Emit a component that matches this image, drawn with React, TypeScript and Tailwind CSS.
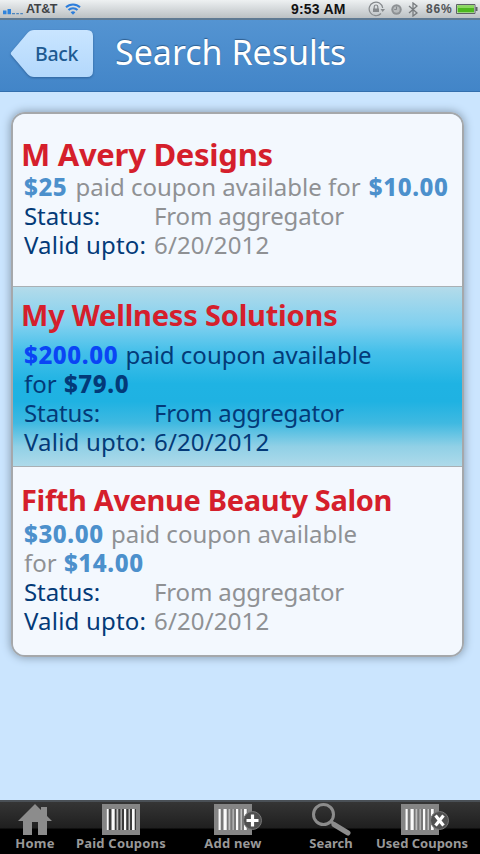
import { ReactNode } from 'react';
import clsx from 'clsx';

type Coupon = {
  name: string;
  nameClass: string;
  rowClass: string;
  offerClass: string;
  offer: ReactNode;
  active?: boolean;
};

const coupons: Coupon[] = [
  {
    name: 'M Avery Designs',
    nameClass: 'text-[31px] tracking-[-0.27px]',
    rowClass: 'h-[172px] pt-[22px]',
    offerClass: '',
    offer: (
      <p>
        <b className="mr-[2px] font-extrabold tracking-[0.6px] text-[#4c90cc]">$25</b> paid coupon available for{' '}
        <b className="ml-[2px] font-extrabold tracking-[0.6px] text-[#4c90cc]">$10.00</b>
      </p>
    ),
  },
  {
    name: 'My Wellness Solutions',
    nameClass: 'text-[29px] tracking-[-0.2px]',
    rowClass: 'h-[181px] border-y border-[#a9b0b4] pt-[10px]',
    offerClass: 'mt-[7px]',
    offer: (
      <>
        <p>
          <b className="mr-px font-extrabold tracking-[0.6px] text-[#0a45f5]">$200.00</b> paid coupon available
        </p>
        <p>
          for <b className="ml-px font-extrabold tracking-[0.6px]">$79.0</b>
        </p>
      </>
    ),
    active: true,
  },
  {
    name: 'Fifth Avenue Beauty Salon',
    nameClass: 'text-[29px] tracking-[-0.35px]',
    rowClass: 'h-[188px] pt-[15px]',
    offerClass: 'mt-px',
    offer: (
      <>
        <p>
          <b className="mr-px font-extrabold tracking-[0.6px] text-[#4c90cc]">$30.00</b> paid coupon available
        </p>
        <p>
          for <b className="ml-px font-extrabold tracking-[0.6px] text-[#4c90cc]">$14.00</b>
        </p>
      </>
    ),
  },
];

function StatusBar() {
  return (
    <div className="flex h-[20px] shrink-0 items-center border-b-2 border-[#5f7a93] bg-linear-to-b from-[#eef1f2] to-[#bcc1c4] font-['Liberation_Sans'] font-bold">
      <svg className="mt-[5px] ml-[3px] h-[6px] w-[20px]" viewBox="0 0 20 6">
        <path d="M0 1.500h3.500V5.300H0zM4.500 0h3.500v5.300h-3.500z" fill="#2f83dc" />
        <path d="M9 4h3v1.300H9zM13.300 4h2.600v1.300h-2.600zM17.300 4h2.600v1.300h-2.600z" fill="#4b84bd" />
      </svg>
      <span className="ml-[3px] w-[38px] text-[12.5px] tracking-[-0.3px] text-[#404346]">AT&amp;T</span>
      <svg className="ml-px h-[12px] w-[16px]" viewBox="0 0 16 12" fill="none" stroke="#2c7ddb" strokeWidth="2">
        <path d="M1 4.300a10 10 0 0 1 14 0M3.500 7a6.400 6.400 0 0 1 9 0" />
        <path d="M5.600 9.200a3.600 3.600 0 0 1 4.800 0L8 11.800z" fill="#2c7ddb" stroke="none" />
      </svg>
      <span className="ml-[210px] w-[56px] text-[14px] tracking-[0.2px] whitespace-nowrap text-[#111]">9:53 AM</span>
      <svg className="ml-[21px] h-[16px] w-[17px]" viewBox="0 0 17 16" fill="none" stroke="#85898c" strokeWidth="1.200">
        <path d="M13 12.500A6.800 6.800 0 1 1 14.700 7" />
        <path d="M12.500 8h4.500l-2.300 3z" fill="#85898c" stroke="none" />
        <path d="M5 7.500h6V11H5z" fill="#85898c" stroke="none" />
        <path d="M6.200 8V5.800a1.800 1.800 0 0 1 3.600 0V8" />
      </svg>
      <svg className="ml-[6px] h-[11px] w-[11px]" viewBox="0 0 11 11">
        <circle cx="5.500" cy="5.500" r="5.200" fill="#8d9194" />
        <circle cx="5.500" cy="5.500" r="3.200" fill="#b7bbbd" />
        <path d="M5.500 2.500v3H3.200" fill="none" stroke="#85898c" />
      </svg>
      <svg className="ml-[6px] h-[15px] w-[10px]" viewBox="0 0 10 15" fill="none" stroke="#777b7e" strokeWidth="1.300">
        <path d="M1 4l8 7-4 3V1l4 3-8 7" />
      </svg>
      <span className="ml-[8px] w-[28px] text-[12px] tracking-[0.8px] text-[#505356]">86%</span>
      <svg className="ml-[2px] h-[12px] w-[22px]" viewBox="0 0 22 12">
        <path d="M.5 1.500h18.500v9H.5z" fill="#e8f0e2" stroke="#5d6165" />
        <path d="M1.500 2.500h16.500v7H1.500z" fill="#4cb81f" />
        <path d="M1.500 2.500h16.500v2.500H1.500z" fill="#8ad85f" />
        <path d="M19.500 4h2v4h-2z" fill="#5d6165" />
      </svg>
    </div>
  );
}

function Header() {
  return (
    <header className="flex h-[72px] shrink-0 items-start border-b border-[#336fae] bg-linear-to-b from-[#5494d2] to-[#4285c8]">
      <button className="relative mt-[9px] ml-[10px] h-[50px] w-[84px]">
        <svg className="absolute inset-0 drop-shadow-[0_1px_1px_rgba(20,60,110,0.5)]" width="84" height="50" viewBox="0 0 84 50">
          <defs>
            <linearGradient id="back" x1="0" y1="0" x2="0" y2="1">
              <stop offset="0" stopColor="#c9e5ff" />
              <stop offset="1" stopColor="#b3d8fc" />
            </linearGradient>
          </defs>
          <path d="M24 1H77Q83 1 83 7V42Q83 48 77 48H24Q20 48 17.500 45L1 25.500Q.5 24.500 1 23.500L17.500 4Q20 1 24 1z" fill="url(#back)" />
        </svg>
        <span className="relative block pl-[25px] text-left text-[19.5px] leading-[50px] font-medium tracking-[-0.3px] text-[#205a92]">Back</span>
      </button>
      <h1 className="ml-[21px] pt-[8px] text-[34px] leading-[48px] font-normal whitespace-nowrap text-white [text-shadow:0_-1px_1px_#2f5f90]">
        Search Results
      </h1>
    </header>
  );
}

function CouponRow({ coupon }: { coupon: Coupon }) {
  return (
    <article
      className={clsx(
        'pl-[8px] whitespace-nowrap',
        coupon.rowClass,
        coupon.active
          ? 'bg-[linear-gradient(#b3dbea,#80d0ef_21%,#45c0ea_36%,#1fb3e3_54%,#1fb2e2_64%,#3fb9e1_76%,#90d0e6_89%,#aedaea)] text-[#033a78]'
          : 'bg-[#f3f8fe] text-[#8f9194]',
      )}
    >
      <h2 className={clsx('leading-9 font-bold text-[#d51f2c]', coupon.nameClass)}>{coupon.name}</h2>
      <div className={clsx('pl-[3px] text-[24px] leading-[29px]', coupon.offerClass)}>
        {coupon.offer}
        <dl className="grid grid-cols-[130px_1fr]">
          <dt className="tracking-[-0.1px] text-[#033a78]">Status:</dt>
          <dd className="tracking-[-0.15px]">From aggregator</dd>
          <dt className="tracking-[0.2px] text-[#033a78]">Valid upto:</dt>
          <dd className="tracking-[0.15px]">6/20/2012</dd>
        </dl>
      </div>
    </article>
  );
}

function Barcode({ badge }: { badge?: 'plus' | 'x' }) {
  return (
    <svg className="h-[33px] w-[48px]" viewBox="0 0 48 33">
      <path d="M0 1h38v31H0z" fill="#858585" />
      <path d="M4 6h30v21H4z" fill={badge ? '#777' : '#3a3a3a'} />
      <path d="M4.500 6h2.200v21H4.500zM9.500 6h3.200v21H9.500zM22 6h2.200v21H22zM30 6h2.700v21H30z" fill="#fafafa" />
      <path d="M14.500 6h1.800v21h-1.800zM18.500 6h1.300v21h-1.300zM26.500 6h1.500v21h-1.500z" fill="#bdbdbd" />
      {badge && (
        <>
          <circle cx="38.500" cy="17.500" r="9" fill="#505050" stroke="#777" />
          <path
            d={badge === 'plus' ? 'M38.500 11.500v12M32.500 17.500h12' : 'M34.500 12.500l8 10M42.500 12.500l-8 10'}
            stroke="#fff"
            strokeWidth="3.200"
          />
        </>
      )}
    </svg>
  );
}

function TabBar() {
  return (
    <nav className="flex h-[54px] shrink-0 border-t-2 border-[#4a5056] bg-[linear-gradient(#353535,#1f1f1f_50%,#000_52%)] text-[13px] leading-[14px] font-bold whitespace-nowrap text-[#999]">
      <div className="flex w-[70px] flex-col items-center">
        <svg className="mt-px h-[33px] w-[34px]" viewBox="0 0 34 33" fill="#8c8c8c">
          <path d="M17 1L0 18h5v14h9V19h6v13h9V18h5l-5-5V4h-6v3z" />
        </svg>
        <span className="tracking-[0.2px]">Home</span>
      </div>
      <div className="flex w-[102px] flex-col items-center">
        <div className="mt-px ml-[10px]">
          <Barcode />
        </div>
        <span className="tracking-[0.2px]">Paid Coupons</span>
      </div>
      <div className="flex w-[122px] flex-col items-center">
        <div className="mt-px ml-[10px]">
          <Barcode badge="plus" />
        </div>
        <span className="tracking-[0.2px]">Add new</span>
      </div>
      <div className="flex w-[74px] flex-col items-center">
        <svg className="mt-px h-[33px] w-[40px]" viewBox="0 0 40 33" fill="none" stroke="#8c8c8c">
          <circle cx="12.500" cy="11.500" r="10" strokeWidth="3" />
          <path d="M20 18.500l4 3" strokeWidth="3" />
          <path d="M23 21.500l14 8.500" strokeWidth="5" strokeLinecap="round" />
        </svg>
        Search
      </div>
      <div className="flex w-[108px] flex-col items-center">
        <div className="mt-px ml-[6px]">
          <Barcode badge="x" />
        </div>
        <span>Used Coupons</span>
      </div>
    </nav>
  );
}

export default function App() {
  return (
    <div className="flex h-[854px] w-[480px] flex-col overflow-hidden bg-[#cbe5fe] font-['Noto_Sans',sans-serif]">
      <StatusBar />
      <Header />
      <main className="flex-1 px-[11px] pt-[20px]">
        <section className="w-[453px] overflow-hidden rounded-[14px] border-2 border-[#a5a8ab] shadow-[0_0_9px_1px_#8ba0b5]">
          {coupons.map((coupon) => (
            <CouponRow key={coupon.name} coupon={coupon} />
          ))}
        </section>
      </main>
      <TabBar />
    </div>
  );
}
